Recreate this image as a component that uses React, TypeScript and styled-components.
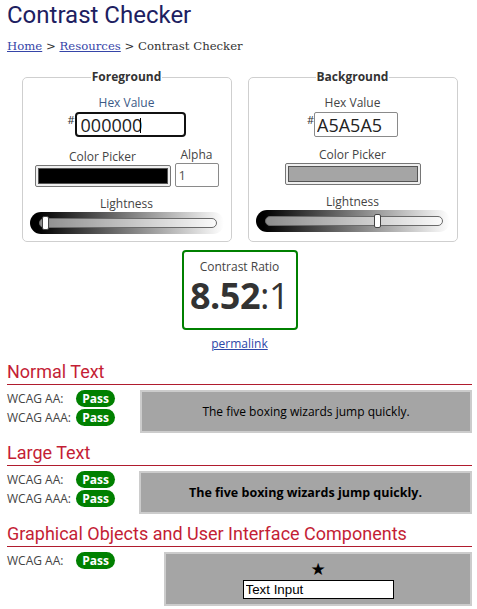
import React from "react";
import styled, { createGlobalStyle } from "styled-components";

const Global = createGlobalStyle`
  html, body { margin: 0; padding: 0; background: #fff; }
  body { font-family: "Open Sans", "Liberation Sans", sans-serif; color: #333; }
  * { box-sizing: border-box; }
`;

const Page = styled.div`
  width: 477px;
  padding: 0 5px 0 7px;
`;

const Title = styled.h1`
  margin: 0;
  font-family: Roboto, "Liberation Sans", sans-serif;
  font-weight: 400;
  font-size: 24px;
  line-height: 30px;
  color: #1d2061;
`;

const Breadcrumb = styled.nav`
  margin-top: 8px;
  font-family: "DejaVu Serif", "Liberation Serif", serif;
  font-size: 11.7px;
  line-height: 16px;
  color: #333;
`;

const Crumb = styled.a`
  color: #3645a8;
  text-decoration: underline;
`;

const Pickers = styled.div`
  display: flex;
  justify-content: center;
  gap: 16px;
  margin-top: 15px;
`;

const Fieldset = styled.fieldset`
  width: 210px;
  margin: 0;
  padding: 10px 7px 7px;
  border: 1px solid #cfcfcf;
  border-radius: 5px;
  display: flex;
  flex-direction: column;
  align-items: center;
`;

const Legend = styled.legend`
  margin: 0 auto;
  padding: 0 1px;
  font-weight: 700;
  font-size: 12px;
  line-height: 16px;
  color: #333;
`;

const Label = styled.div<{ $tint?: boolean }>`
  font-size: 12px;
  line-height: 16px;
  color: ${(p) => (p.$tint ? "#3b5a86" : "#444")};
  text-align: center;
`;

const HexRow = styled.div`
  display: flex;
  align-items: flex-start;
  margin-top: 1px;
`;

const Hash = styled.span`
  font-size: 11px;
  line-height: 12px;
  margin-top: 2px;
  color: #333;
`;

const InputWrap = styled.div`
  position: relative;
`;

const HexInput = styled.input<{ $focused?: boolean; $w: number }>`
  display: block;
  width: ${(p) => p.$w}px;
  height: 25px;
  margin: 0;
  padding: 0 0 0 ${(p) => (p.$focused ? 4 : 2)}px;
  border: ${(p) => (p.$focused ? "2px solid #111" : "1px solid #8a8a8a")};
  border-radius: ${(p) => (p.$focused ? 4 : 2)}px;
  font-family: "Open Sans", sans-serif;
  font-size: 18px;
  color: #222;
  background: #fff;
  outline: none;
`;

const Caret = styled.span<{ $left: number }>`
  position: absolute;
  left: ${(p) => p.$left}px;
  top: 6px;
  width: 1px;
  height: 15px;
  background: #000;
`;

const PickerRow = styled.div`
  display: flex;
  align-items: flex-end;
  gap: 4px;
  margin-top: 10px;
`;

const PickerCol = styled.div`
  display: flex;
  flex-direction: column;
  align-items: center;
`;

const Swatch = styled.div`
  width: 136px;
  height: 22px;
  padding: 2px;
  border: 1px solid #767676;
  border-radius: 2px;
  background: #efefef;
  display: flex;
`;

const SwatchFill = styled.div<{ $color: string }>`
  flex: 1;
  border: 1px solid #555;
  background: ${(p) => p.$color};
`;

const AlphaInput = styled.input`
  display: block;
  width: 44px;
  height: 24px;
  margin: 0;
  padding: 0 0 0 3px;
  border: 1px solid #8a8a8a;
  border-radius: 2px;
  font-family: "Open Sans", sans-serif;
  font-size: 13px;
  color: #555;
  background: #fff;
`;

const LightnessBlock = styled.div`
  margin-top: 9px;
  display: flex;
  flex-direction: column;
  align-items: center;
`;

const Slider = styled.div`
  width: 194px;
  height: 22px;
  border-radius: 11px;
  background: linear-gradient(to right, #000 0%, #000 4%, #fff 100%);
  display: flex;
  align-items: center;
  padding: 0 7px 0 9px;
`;

const Track = styled.div`
  position: relative;
  flex: 1;
  height: 10px;
  border: 1px solid #6a6a6a;
  border-radius: 5px;
  background: rgba(255, 255, 255, 0.55);
`;

const Thumb = styled.div`
  position: absolute;
  top: -3px;
  width: 7px;
  height: 14px;
  background: #fff;
  border: 1px solid #444;
  border-radius: 2px;
`;

const RatioBox = styled.div`
  width: 116px;
  height: 80px;
  margin: 8px auto 0;
  border: 2px solid #008000;
  border-radius: 4px;
  padding-top: 7px;
  display: flex;
  flex-direction: column;
  align-items: center;
`;

const RatioLabel = styled.div`
  font-size: 12px;
  line-height: 16px;
  color: #444;
`;

const RatioValue = styled.div`
  margin-top: 3px;
  font-size: 36px;
  line-height: 36px;
  color: #333;
  letter-spacing: -0.5px;
`;

const Strong = styled.span`
  font-weight: 700;
`;

const Permalink = styled.a`
  display: block;
  width: max-content;
  margin: 6px auto 0;
  font-size: 12px;
  line-height: 16px;
  color: #2d47a8;
  text-decoration: underline;
`;

const Section = styled.section<{ $first?: boolean }>`
  margin-top: ${(p) => (p.$first ? 9 : 9)}px;
`;

const SectionTitle = styled.h2`
  margin: 0;
  padding-bottom: 1px;
  border-bottom: 1px solid #b01c2e;
  font-family: Roboto, "Liberation Sans", sans-serif;
  font-weight: 400;
  font-size: 18px;
  line-height: 22px;
  color: #c41e35;
`;

const ResultRow = styled.div<{ $left: number }>`
  display: grid;
  grid-template-columns: ${(p) => p.$left}px 1fr;
  margin-top: 5px;
`;

const Checks = styled.div`
  display: flex;
  flex-direction: column;
  gap: 2px;
`;

const Check = styled.div`
  display: flex;
  align-items: center;
  height: 17px;
`;

const CheckLabel = styled.span`
  width: 69px;
  font-size: 12px;
  color: #444;
`;

const Badge = styled.span`
  width: 39px;
  height: 17px;
  border-radius: 9px;
  background: #008000;
  color: #fff;
  font-weight: 700;
  font-size: 12px;
  line-height: 17px;
  text-align: center;
`;

const Sample = styled.div<{ $bold?: boolean; $h: number }>`
  height: ${(p) => p.$h}px;
  border: 2px solid #cccccc;
  background: #a5a5a5;
  color: #000;
  display: flex;
  align-items: center;
  justify-content: center;
  font-size: ${(p) => (p.$bold ? 12.5 : 12)}px;
  font-weight: ${(p) => (p.$bold ? 700 : 400)};
`;

const GraphicSample = styled.div`
  height: 54px;
  border: 2px solid #cccccc;
  background: #a5a5a5;
  display: flex;
  flex-direction: column;
  align-items: center;
  padding-top: 5px;
`;

const Star = styled.span`
  font-family: "DejaVu Sans", sans-serif;
  font-size: 17px;
  line-height: 21px;
  color: #000;
`;

const TextInput = styled.input`
  display: block;
  width: 151px;
  height: 19px;
  margin: 0;
  padding: 0 2px;
  border: 1px solid #000;
  border-radius: 0;
  background: #fff;
  font-family: "Liberation Sans", Arial, sans-serif;
  font-size: 13.33px;
  color: #000;
`;

type CheckItem = { label: string };

const CheckList: React.FC<{ items: CheckItem[] }> = ({ items }) => (
  <Checks>
    {items.map((c) => (
      <Check key={c.label}>
        <CheckLabel>{c.label}</CheckLabel>
        <Badge>Pass</Badge>
      </Check>
    ))}
  </Checks>
);

const LightnessSlider: React.FC<{ value: number }> = ({ value }) => (
  <LightnessBlock>
    <Label>Lightness</Label>
    <Slider>
      <Track>
        <Thumb style={{ left: `calc(2px + ${value} * (100% - 11px))` }} />
      </Track>
    </Slider>
  </LightnessBlock>
);

const both = [{ label: "WCAG AA:" }, { label: "WCAG AAA:" }];

export default function App() {
  return (
    <Page>
      <Global />
      <Title>Contrast Checker</Title>
      <Breadcrumb>
        <Crumb href="#">Home</Crumb> &gt; <Crumb href="#">Resources</Crumb> &gt; Contrast Checker
      </Breadcrumb>

      <Pickers>
        <Fieldset>
          <Legend>Foreground</Legend>
          <Label $tint>Hex Value</Label>
          <HexRow>
            <Hash>#</Hash>
            <InputWrap>
              <HexInput $focused $w={111} defaultValue="000000" readOnly />
              <Caret $left={65} />
            </InputWrap>
          </HexRow>
          <PickerRow>
            <PickerCol>
              <Label>Color Picker</Label>
              <Swatch>
                <SwatchFill $color="#000000" />
              </Swatch>
            </PickerCol>
            <PickerCol>
              <Label>Alpha</Label>
              <AlphaInput defaultValue="1" readOnly />
            </PickerCol>
          </PickerRow>
          <LightnessSlider value={0} />
        </Fieldset>

        <Fieldset>
          <Legend>Background</Legend>
          <Label>Hex Value</Label>
          <HexRow>
            <Hash>#</Hash>
            <HexInput $w={84} defaultValue="A5A5A5" readOnly />
          </HexRow>
          <PickerRow>
            <PickerCol>
              <Label>Color Picker</Label>
              <Swatch>
                <SwatchFill $color="#a5a5a5" />
              </Swatch>
            </PickerCol>
          </PickerRow>
          <LightnessSlider value={165 / 255} />
        </Fieldset>
      </Pickers>

      <RatioBox>
        <RatioLabel>Contrast Ratio</RatioLabel>
        <RatioValue>
          <Strong>8.52</Strong>:1
        </RatioValue>
      </RatioBox>
      <Permalink href="#">permalink</Permalink>

      <Section $first>
        <SectionTitle>Normal Text</SectionTitle>
        <ResultRow $left={133}>
          <CheckList items={both} />
          <Sample $h={43}>The five boxing wizards jump quickly.</Sample>
        </ResultRow>
      </Section>

      <Section>
        <SectionTitle>Large Text</SectionTitle>
        <ResultRow $left={132}>
          <CheckList items={both} />
          <Sample $bold $h={43}>The five boxing wizards jump quickly.</Sample>
        </ResultRow>
      </Section>

      <Section>
        <SectionTitle>Graphical Objects and User Interface Components</SectionTitle>
        <ResultRow $left={157}>
          <CheckList items={[{ label: "WCAG AA:" }]} />
          <GraphicSample>
            <Star>★</Star>
            <TextInput defaultValue="Text Input" readOnly />
          </GraphicSample>
        </ResultRow>
      </Section>
    </Page>
  );
}
